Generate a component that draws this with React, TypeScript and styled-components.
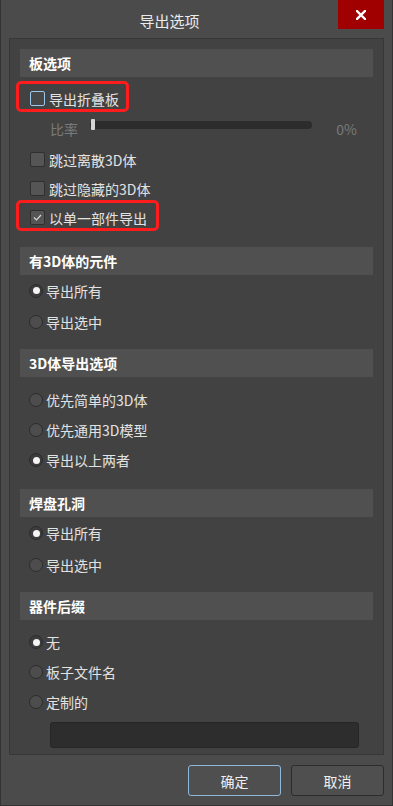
import React from "react";
import styled, { createGlobalStyle } from "styled-components";

const Global = createGlobalStyle`
  html, body { margin: 0; padding: 0; background: #4b4b4b; }
  * { box-sizing: border-box; }
  body { font-family: "Noto Sans CJK SC", "Noto Sans", sans-serif; }
`;

const Window = styled.div`
  width: 393px;
  height: 806px;
  background: #4b4b4b;
  border: 1px solid #333;
  border-top: none;
  display: flex;
  flex-direction: column;
  color: #e2e2e2;
  font-size: 14px;
`;

const TitleBar = styled.div`
  height: 38px;
  display: flex;
  align-items: flex-start;
  padding-right: 8px;
  flex-shrink: 0;
`;

const Title = styled.div`
  flex: 1;
  height: 38px;
  display: flex;
  align-items: center;
  justify-content: center;
  font-size: 15px;
  color: #ececec;
  padding-top: 2px;
`;

const CloseBtn = styled.div`
  width: 46px;
  height: 29px;
  background: #a00000;
  display: flex;
  align-items: center;
  justify-content: center;
`;

const Panel = styled.div`
  margin: 0 8px;
  height: 717px;
  border: 1px solid #373737;
  background: #424242;
  padding: 10px 10px 6px 10px;
  display: flex;
  flex-direction: column;
`;

const Header = styled.div<{ $mt?: number }>`
  height: 28px;
  margin-top: ${(p) => p.$mt ?? 0}px;
  background: #505050;
  display: flex;
  align-items: center;
  padding-left: 9px;
  font-weight: 700;
  font-size: 14px;
  color: #ffffff;
  flex-shrink: 0;
`;

const Group = styled.div<{ $pt?: number }>`
  display: flex;
  flex-direction: column;
  padding-top: ${(p) => p.$pt ?? 0}px;
`;

const Row = styled.label<{ $h: number; $indent?: number }>`
  position: relative;
  height: ${(p) => p.$h}px;
  display: flex;
  align-items: center;
  padding-left: ${(p) => p.$indent ?? 10}px;
  flex-shrink: 0;
  color: #e2e2e2;
`;

const Box = styled.span<{ $focus?: boolean }>`
  width: 15px;
  height: 15px;
  border-radius: 2px;
  border: 1px solid ${(p) => (p.$focus ? "#9cc6ea" : "#2f2f2f")};
  background: ${(p) => (p.$focus ? "#474747" : "#555555")};
  margin-right: 4px;
  display: flex;
  align-items: center;
  justify-content: center;
  flex-shrink: 0;
`;

const Radio = styled.span<{ $on?: boolean }>`
  width: 14px;
  height: 14px;
  border-radius: 50%;
  border: 1px solid #2c2c2c;
  background: ${(p) => (p.$on ? "#3c3c3c" : "#4d4d4d")};
  margin-right: 3px;
  display: flex;
  align-items: center;
  justify-content: center;
  flex-shrink: 0;
  &::after {
    content: "";
    display: ${(p) => (p.$on ? "block" : "none")};
    width: 7px;
    height: 7px;
    border-radius: 50%;
    background: #f4f4f4;
  }
`;

const Highlight = styled.span<{ $w: number }>`
  position: absolute;
  left: -4px;
  top: -3px;
  width: ${(p) => p.$w}px;
  height: 31px;
  border: 3px solid #ff1c1c;
  border-radius: 5px;
  pointer-events: none;
`;

const SliderRow = styled.div`
  height: 28px;
  display: flex;
  align-items: center;
  padding-left: 30px;
  padding-right: 16px;
  margin-bottom: 4px;
  color: #7a7a7a;
`;

const SliderLabel = styled.span`
  width: 40px;
  padding-top: 3px;
`;

const Track = styled.div`
  position: relative;
  flex: 1;
  height: 8px;
  border-radius: 4px;
  background: #2c2c2c;
  margin-top: -4px;
`;

const Thumb = styled.span`
  position: absolute;
  left: 1px;
  top: -2px;
  width: 4px;
  height: 11px;
  border-radius: 1px;
  background: #d6d6d6;
`;

const Percent = styled.span`
  width: 45px;
  text-align: right;
  padding-top: 3px;
`;

const TextInput = styled.div`
  height: 26px;
  margin: 5px 14px 0 30px;
  background: #2d2d2d;
  border: 1px solid #262626;
  border-radius: 3px;
`;

const Footer = styled.div`
  display: flex;
  justify-content: flex-end;
  gap: 10px;
  padding: 10px 8px 0 0;
`;

const Button = styled.div<{ $primary?: boolean }>`
  width: 93px;
  height: 31px;
  border-radius: 3px;
  border: 1px solid ${(p) => (p.$primary ? "#8fb8dc" : "#2c2c2c")};
  background: #4f4f4f;
  display: flex;
  align-items: center;
  justify-content: center;
  font-size: 14px;
  color: #f0f0f0;
`;

const Check = () => (
  <svg width="11" height="11" viewBox="0 0 11 11">
    <path d="M2 5.5 L4.5 8 L9 3" fill="none" stroke="#d8d8d8" strokeWidth="1.2" />
  </svg>
);

const CloseX = () => (
  <svg width="10" height="10" viewBox="0 0 10 10">
    <path d="M1 1 L9 9 M9 1 L1 9" stroke="#ffffff" strokeWidth="2.4" strokeLinecap="square" />
  </svg>
);

type Opt = { label: string; on?: boolean };

const RadioGroup = ({ items, h, pt }: { items: Opt[]; h: number; pt?: number }) => (
  <Group $pt={pt}>
    {items.map((it) => (
      <Row key={it.label} $h={h} $indent={9}>
        <Radio $on={it.on} />
        {it.label}
      </Row>
    ))}
  </Group>
);

export default function App() {
  return (
    <>
      <Global />
      <Window>
        <TitleBar>
          <Title>导出选项</Title>
          <CloseBtn>
            <CloseX />
          </CloseBtn>
        </TitleBar>
        <Panel>
          <Header>板选项</Header>
          <Group $pt={7}>
            <Row $h={29}>
              <Highlight $w={113} />
              <Box $focus />
              导出折叠板
            </Row>
          </Group>
          <SliderRow>
            <SliderLabel>比率</SliderLabel>
            <Track>
              <Thumb />
            </Track>
            <Percent>0%</Percent>
          </SliderRow>
          <Group>
            <Row $h={29}>
              <Box />
              跳过离散3D体
            </Row>
            <Row $h={29}>
              <Box />
              跳过隐藏的3D体
            </Row>
            <Row $h={29}>
              <Highlight $w={143} />
              <Box>
                <Check />
              </Box>
              以单一部件导出
            </Row>
          </Group>

          <Header $mt={15}>有3D体的元件</Header>
          <RadioGroup h={31} items={[{ label: "导出所有", on: true }, { label: "导出选中" }]} />

          <Header $mt={12}>3D体导出选项</Header>
          <RadioGroup
            h={30}
            pt={8}
            items={[{ label: "优先简单的3D体" }, { label: "优先通用3D模型" }, { label: "导出以上两者", on: true }]}
          />

          <Header $mt={14}>焊盘孔洞</Header>
          <RadioGroup h={32} items={[{ label: "导出所有", on: true }, { label: "导出选中" }]} />

          <Header $mt={11}>器件后缀</Header>
          <RadioGroup
            h={30}
            pt={7}
            items={[{ label: "无", on: true }, { label: "板子文件名" }, { label: "定制的" }]}
          />
          <TextInput />
        </Panel>
        <Footer>
          <Button $primary>确定</Button>
          <Button>取消</Button>
        </Footer>
      </Window>
    </>
  );
}
